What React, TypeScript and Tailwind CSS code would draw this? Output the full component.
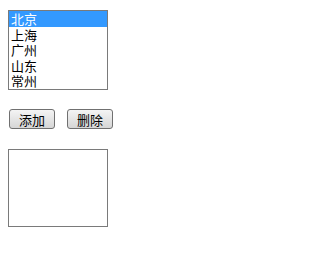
const cities = ['北京', '上海', '广州', '山东', '常州'];

export default function App() {
  const font = { fontFamily: '"Noto Sans CJK SC", "Liberation Sans", sans-serif' };
  return (
    <div className="min-h-[262px] w-[211px] bg-white pl-[8px] pt-[10px]" style={font}>
      {/* city list */}
      <div className="flex h-[80px] w-[100px] flex-col border border-[#7a7a7a] bg-white">
        {cities.map((c, i) => (
          <div
            key={c}
            className={
              'h-[15.6px] pl-[2px] text-[13px] leading-[15.6px] ' +
              (i === 0 ? 'bg-[#3399ff] text-white' : 'text-black')
            }
          >
            {c}
          </div>
        ))}
      </div>

      {/* buttons */}
      <div className="mt-[19px] flex gap-[12px] pl-[1px]">
        <button className="h-[20px] w-[46px] rounded-[3px] border border-[#707070] bg-gradient-to-b from-[#f4f4f4] to-[#d6d6d6] text-[13px] leading-none text-black">
          添加
        </button>
        <button className="h-[20px] w-[46px] rounded-[3px] border border-[#707070] bg-gradient-to-b from-[#f4f4f4] to-[#d6d6d6] text-[13px] leading-none text-black">
          删除
        </button>
      </div>

      {/* result box */}
      <div className="mt-[20px] h-[78px] w-[100px] border border-[#7a7a7a] bg-white" />
    </div>
  );
}
